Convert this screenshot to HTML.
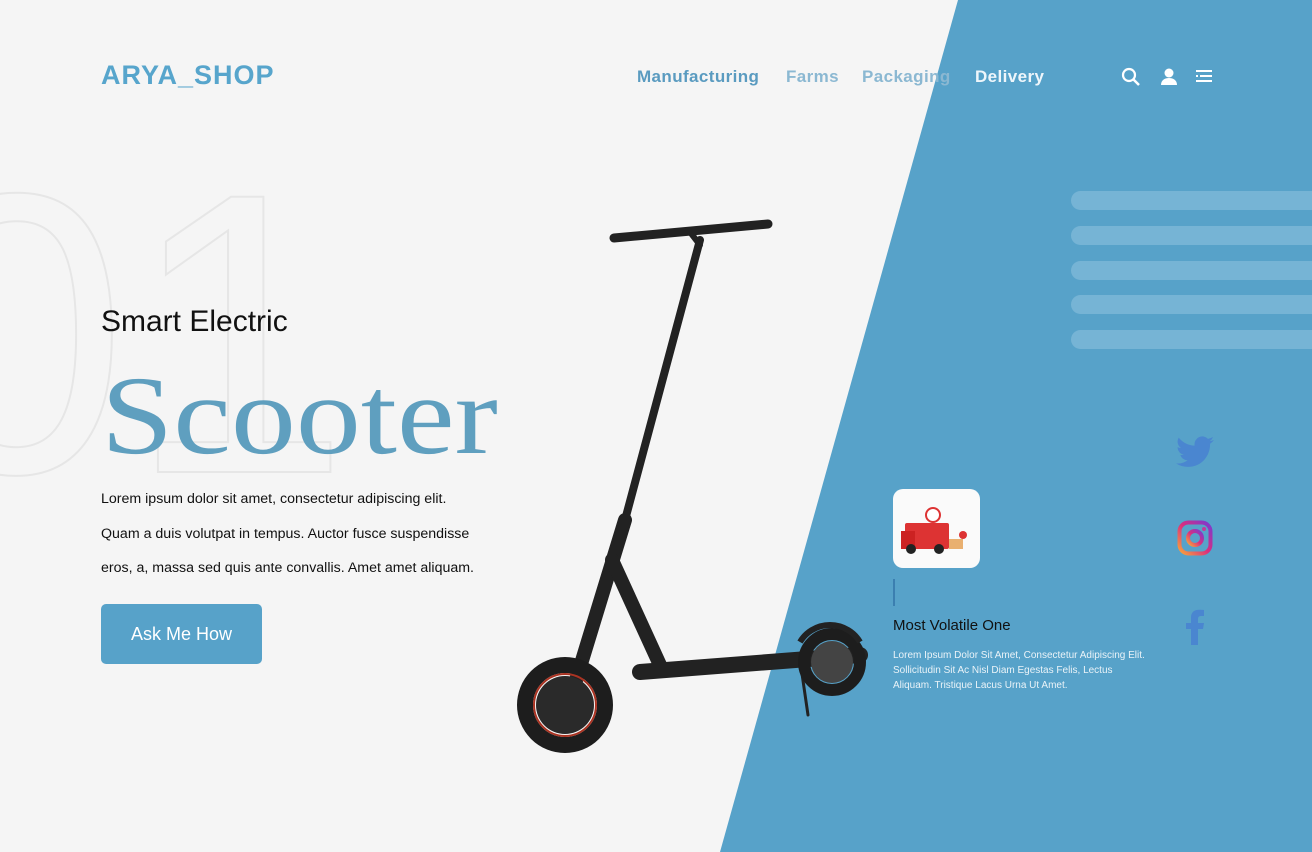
<!DOCTYPE html>
<html><head><meta charset="utf-8"><style>
*{margin:0;padding:0;box-sizing:border-box}
body{width:1312px;height:852px;overflow:hidden;background:#f5f5f5;font-family:"Liberation Sans",sans-serif;position:relative}
.abs{position:absolute}
.logo{left:101px;top:60px;font-size:27px;font-weight:bold;color:#57a5cc;letter-spacing:1px}
.nav a{position:absolute;top:67px;font-size:17px;font-weight:bold;text-decoration:none;letter-spacing:0.4px}
.bar{left:1071px;width:260px;height:19px;border-radius:10px;background:#76b4d5}
</style></head><body>
<svg class="abs" style="left:0;top:0" width="1312" height="852"><polygon points="958,0 1312,0 1312,852 720,852" fill="#57a2c9"/>
<text x="-95" y="472" font-family="Liberation Sans" font-size="400" fill="none" stroke="#e6e6e6" stroke-width="2">01</text>
</svg>
<div class="abs logo">ARYA_SHOP</div>
<div class="nav">
<a style="left:637px;color:#5a9bc0">Manufacturing</a>
<a style="left:786px;color:#8bb8d2">Farms</a>
<a style="left:862px;color:#8bb8d2">Packaging</a>
<a style="left:975px;color:#eef6fb">Delivery</a>
</div>
<svg class="abs" style="left:1120px;top:66px" width="100" height="24" fill="#fff">
<circle cx="9" cy="9" r="6" fill="none" stroke="#fff" stroke-width="2.2"/><path d="M13 13l6 6" stroke="#fff" stroke-width="2.5"/>
<circle cx="49" cy="7" r="4.5"/><path d="M41 19c0-5 4-7 8-7s8 2 8 7z"/>
<path d="M76 5h16M80 10h12M76 10h2M76 15h16" stroke="#fff" stroke-width="2"/>
</svg>
<div class="abs bar" style="top:191px"></div><div class="abs bar" style="top:226px"></div><div class="abs bar" style="top:261px"></div><div class="abs bar" style="top:295px"></div><div class="abs bar" style="top:330px"></div>
<div class="abs" style="left:101px;top:305px;font-size:30px;color:#111">Smart Electric</div>
<div class="abs" style="left:101px;top:352px;font-size:112px;font-family:'Liberation Serif',serif;color:#5f9fbf;transform:scaleX(1.16);transform-origin:0 0">Scooter</div>
<div class="abs" style="left:101px;top:482px;font-size:14.2px;line-height:34.5px;color:#111;width:378px">Lorem ipsum dolor sit amet, consectetur adipiscing elit. Quam a duis volutpat in tempus. Auctor fusce suspendisse eros, a, massa sed quis ante convallis. Amet amet aliquam.</div>
<div class="abs" style="left:101px;top:604px;width:161px;height:60px;background:#57a2c9;border-radius:5px;color:#fff;font-size:18px;text-align:center;line-height:60px">Ask Me How</div>
<svg class="abs" style="left:0;top:0" width="1312" height="852">
<g stroke="#222" fill="none" stroke-linecap="round">
<path d="M614 238L768 224" stroke-width="9"/>
<path d="M690 232L700 245" stroke-width="6"/>
<path d="M700 240L625 520" stroke-width="8"/>
<path d="M625 520L570 700" stroke-width="14"/>
<path d="M612 560L660 665" stroke-width="14"/>
<path d="M640 672L860 655" stroke-width="16"/>
<path d="M800 660L808 715" stroke-width="3"/>
</g>
<circle cx="565" cy="705" r="40" fill="none" stroke="#1d1d1d" stroke-width="16"/>
<circle cx="565" cy="705" r="31" fill="none" stroke="#a32" stroke-width="2"/>
<circle cx="565" cy="705" r="29" fill="#2a2a2a"/>
<circle cx="832" cy="662" r="28" fill="none" stroke="#1d1d1d" stroke-width="12"/>
<circle cx="832" cy="662" r="21" fill="#444"/>
<path d="M800 642a35 35 0 0 1 60 0" stroke="#222" stroke-width="6" fill="none"/>
</svg>
<div class="abs" style="left:893px;top:489px;width:87px;height:79px;background:#fafafa;border-radius:10px"></div>
<svg class="abs" style="left:893px;top:489px" width="87" height="79">
<rect x="12" y="34" width="44" height="26" rx="2" fill="#d33"/><rect x="8" y="42" width="14" height="18" fill="#c22"/>
<circle cx="18" cy="60" r="5" fill="#222"/><circle cx="46" cy="60" r="5" fill="#222"/>
<circle cx="40" cy="26" r="7" fill="#fff" stroke="#d33" stroke-width="2"/>
<rect x="56" y="50" width="14" height="10" fill="#e9b070"/><circle cx="70" cy="46" r="4" fill="#d33"/>
</svg>
<div class="abs" style="left:893px;top:579px;width:2px;height:27px;background:#3b7fb0"></div>
<div class="abs" style="left:893px;top:617px;font-size:15px;color:#111">Most Volatile One</div>
<div class="abs" style="left:893px;top:648px;font-size:10px;line-height:15px;color:#eaf3f8;width:260px">Lorem Ipsum Dolor Sit Amet, Consectetur Adipiscing Elit. Sollicitudin Sit Ac Nisl Diam Egestas Felis, Lectus Aliquam. Tristique Lacus Urna Ut Amet.</div>
<svg class="abs" style="left:1176px;top:436px" width="38" height="32" viewBox="0 0 24 20"><path fill="#4a86d0" d="M24 2.4a10 10 0 0 1-2.8.8A5 5 0 0 0 23.3.5a10 10 0 0 1-3.1 1.2A4.9 4.9 0 0 0 11.8 6 14 14 0 0 1 1.7.9a4.9 4.9 0 0 0 1.5 6.6A4.9 4.9 0 0 1 1 6.9a4.9 4.9 0 0 0 3.9 4.8 5 5 0 0 1-2.2.1 4.9 4.9 0 0 0 4.6 3.4A9.9 9.9 0 0 1 0 17.2 14 14 0 0 0 7.5 19.4c9.1 0 14-7.5 14-14v-.6A10 10 0 0 0 24 2.4z"/></svg>
<svg class="abs" style="left:1177px;top:520px" width="36" height="36"><defs><linearGradient id="ig" x1="0" y1="1" x2="1" y2="0"><stop offset="0" stop-color="#f9a43a"/><stop offset=".5" stop-color="#d92e7f"/><stop offset="1" stop-color="#7a3bd1"/></linearGradient></defs>
<rect x="2.5" y="2.5" width="31" height="31" rx="9" fill="none" stroke="url(#ig)" stroke-width="4"/><circle cx="18" cy="18" r="7" fill="none" stroke="url(#ig)" stroke-width="4"/><circle cx="27" cy="9" r="2" fill="#c33a9a"/></svg>
<svg class="abs" style="left:1185px;top:609px" width="20" height="36" viewBox="0 0 20 36"><path fill="#4a86d0" d="M13 36V20h5l1-6h-6v-4c0-2 1-3 3-3h3V1c-1 0-3-.2-5-.2C9 .8 6 3.5 6 8.5V14H1v6h5v16z"/></svg>
</body></html>
